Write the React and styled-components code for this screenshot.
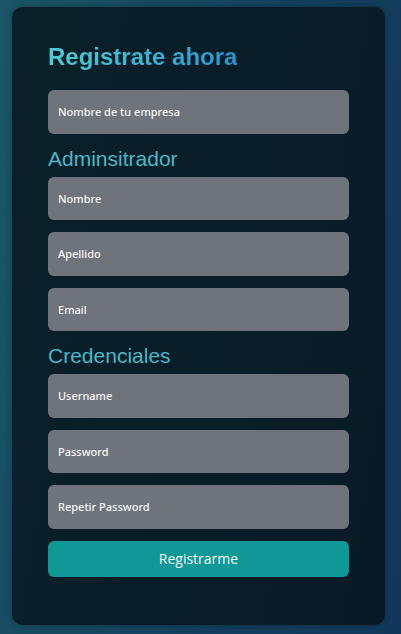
import React from "react";
import styled, { createGlobalStyle } from "styled-components";

const Global = createGlobalStyle`
  html, body { margin: 0; padding: 0; }
  body {
    width: 401px;
    height: 634px;
    overflow: hidden;
    background: linear-gradient(100deg, #1a5667 0%, #143f5c 60%, #11385a 100%);
    font-family: "Open Sans", "Noto Sans", sans-serif;
  }
`;

const Page = styled.div`
  padding: 7px 16px 9px 12px;
  box-sizing: border-box;
  height: 634px;
`;

const Card = styled.form`
  box-sizing: border-box;
  height: 618px;
  border-radius: 10px;
  background: linear-gradient(100deg, #0a2029 0%, #081a26 100%);
  box-shadow: 0 0 6px rgba(0, 0, 0, 0.25);
  padding: 36px 36px 0 36px;
  display: flex;
  flex-direction: column;
`;

const Title = styled.h1`
  margin: 0 0 19px;
  font-family: "Liberation Sans", Arial, sans-serif;
  font-size: 24px;
  line-height: 28px;
  font-weight: 700;
  background: linear-gradient(90deg, #50cdd3 0%, #3fb6d0 45%, #2a93cf 100%);
  -webkit-background-clip: text;
  background-clip: text;
  color: transparent;
  width: max-content;
`;

const Section = styled.h2`
  margin: 13px 0 7px;
  font-family: "Liberation Sans", Arial, sans-serif;
  font-size: 21px;
  line-height: 23px;
  font-weight: 400;
  color: #47b9c7;
`;

const Fields = styled.div`
  display: flex;
  flex-direction: column;
  gap: 12px;
`;

const Input = styled.input`
  box-sizing: border-box;
  width: 100%;
  height: 43.5px;
  border: none;
  outline: none;
  border-radius: 6px;
  background: #6f747c;
  padding: 0 10px;
  font-family: "Noto Sans", "Open Sans", sans-serif;
  font-size: 11px;
  font-weight: 500;
  color: #f6f6f6;
  &::placeholder { color: #f6f6f6; opacity: 1; }
`;

const Button = styled.button`
  height: 36px;
  width: 100%;
  border: none;
  border-radius: 6px;
  background: #109896;
  color: #f2f7f7;
  font-family: "Open Sans", "Noto Sans", sans-serif;
  font-size: 14px;
  font-weight: 400;
  cursor: pointer;
`;

export default function App() {
  return (
    <>
      <Global />
      <Page>
        <Card onSubmit={(e) => e.preventDefault()}>
          <Title>Registrate ahora</Title>
          <Fields>
            <Input placeholder="Nombre de tu empresa" />
          </Fields>
          <Section>Adminsitrador</Section>
          <Fields>
            <Input placeholder="Nombre" />
            <Input placeholder="Apellido" />
            <Input placeholder="Email" />
          </Fields>
          <Section>Credenciales</Section>
          <Fields>
            <Input placeholder="Username" />
            <Input placeholder="Password" />
            <Input placeholder="Repetir Password" />
            <Button type="submit">Registrarme</Button>
          </Fields>
        </Card>
      </Page>
    </>
  );
}
